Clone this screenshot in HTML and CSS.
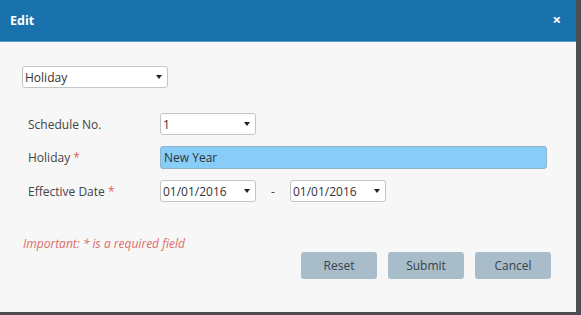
FILE: index.html
```html
<!DOCTYPE html>
<html lang="en">
<head>
    <meta charset="UTF-8">
    <meta name="viewport" content="width=device-width, initial-scale=1.0">
    <title>Edit</title>
    <link rel="stylesheet" href="styles.css">
</head>
<body>

<div class="modal">
    <header class="modal-header">
        <h1>Edit</h1>
        <span class="close">&times;</span>
    </header>

    <main class="modal-body">
        <div class="select type-select">
            <span>Holiday</span>
            <i class="caret"></i>
        </div>

        <div class="form">
            <label>Schedule No.</label>
            <div class="select small">
                <span>1</span>
                <i class="caret"></i>
            </div>

            <label>Holiday <b class="req">*</b></label>
            <div class="text-input">New Year</div>

            <label>Effective Date <b class="req">*</b></label>
            <div class="dates">
                <div class="select small">
                    <span>01/01/2016</span>
                    <i class="caret"></i>
                </div>
                <span class="dash">-</span>
                <div class="select small">
                    <span>01/01/2016</span>
                    <i class="caret"></i>
                </div>
            </div>
        </div>

        <p class="note">Important: * is a required field</p>

        <div class="buttons">
            <button>Reset</button>
            <button>Submit</button>
            <button>Cancel</button>
        </div>
    </main>
</div>

</body>
</html>
```

FILE: styles.css
```css
body {
    margin: 0;
    background-color: #4b4d50;
    font-family: 'Open Sans', 'Noto Sans', sans-serif;
    font-size: 12px;
    color: #444;
    height: 315px;
    overflow: hidden;
}

.modal {
    width: 576px;
    height: 312px;
    background-color: #f7f7f7;
    display: flex;
    flex-direction: column;
}

.modal-header {
    background-color: #1a72ad;
    height: 42px;
    display: flex;
    align-items: center;
    justify-content: space-between;
    padding: 0 15px 0 10px;
    border-bottom: 1px solid #5a9ccb;
    box-sizing: border-box;
}

.modal-header h1 {
    margin: 0;
    color: #fff;
    font-size: 12.5px;
    font-weight: bold;
}

.close {
    color: #fff;
    font-size: 15px;
    font-weight: bold;
    line-height: 1;
    margin-bottom: 3px;
}

.modal-body {
    padding: 24px 25px 0 22px;
}

.select {
    background-color: #fff;
    border: 1px solid #c4c4c4;
    border-radius: 3px;
    height: 22px;
    box-sizing: border-box;
    display: flex;
    align-items: center;
    justify-content: space-between;
    padding: 0 5px 0 2px;
    color: #333;
}

.caret {
    width: 0;
    height: 0;
    border-left: 3.5px solid transparent;
    border-right: 3.5px solid transparent;
    border-top: 4px solid #222;
}

.type-select {
    width: 146px;
}

.form {
    display: grid;
    grid-template-columns: 132px 1fr;
    row-gap: 11px;
    align-items: center;
    margin: 25px 4px 0 6px;
}

.form label {
    color: #444;
}

.req {
    color: #e85a5a;
    font-weight: normal;
}

.small {
    width: 96px;
}

.text-input {
    background-color: #87cdf7;
    border: 1px solid #8fb4cc;
    border-radius: 3px;
    height: 23px;
    box-sizing: border-box;
    display: flex;
    align-items: center;
    padding: 0 3px;
    color: #333;
}

.dates {
    display: flex;
    align-items: center;
}

.dash {
    width: 34px;
    text-align: center;
}

.note {
    margin: 33px 0 0 1px;
    color: #e06a6a;
    font-style: italic;
}

.buttons {
    display: flex;
    justify-content: flex-end;
    gap: 11px;
    margin-top: 0;
}

button {
    width: 76px;
    height: 27px;
    border: none;
    border-radius: 3px;
    background-color: #a8bdc9;
    color: #36424d;
    font-family: inherit;
    font-size: 12px;
}
```
